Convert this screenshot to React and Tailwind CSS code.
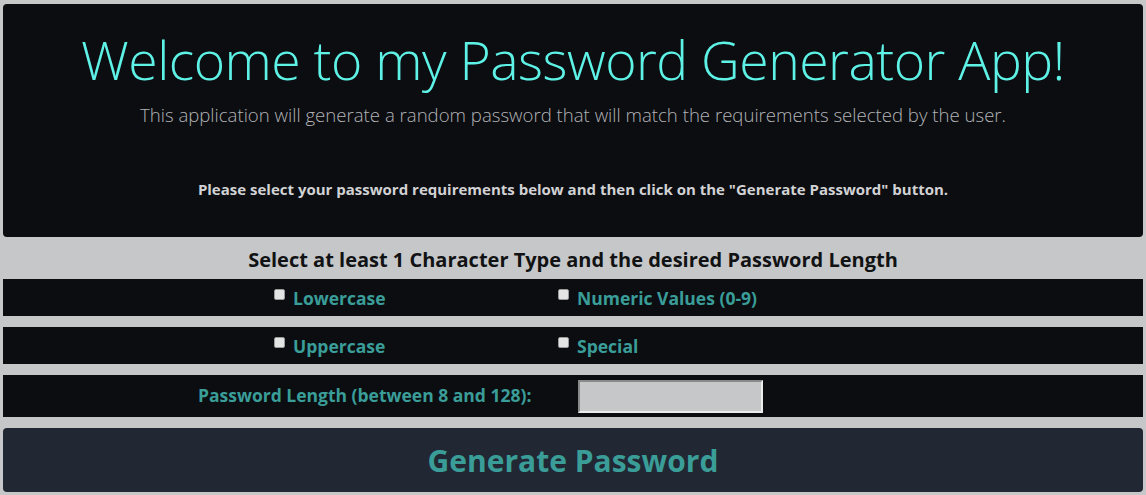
export default function App() {
  const sans = { fontFamily: '"Open Sans", "Noto Sans", sans-serif' };
  const Check = () => (
    <span className="inline-block w-[11px] h-[11px] rounded-[2px] bg-[#e4e4e4] border border-[#9a9a9a] mr-[8px] relative -top-[4px]" />
  );
  return (
    <div className="w-[1146px] h-[495px] bg-[#c6c7c9] px-[3px] pt-[4px] flex flex-col overflow-hidden" style={sans}>
      <div className="h-[233px] bg-[#0b0d11] rounded-[4px] flex flex-col items-center">
        <h1 className="mt-[24px] text-[53.5px] leading-[64px] font-light text-[#5ef2e6] tracking-[-0.5px]">
          Welcome to my Password Generator App!
        </h1>
        <p className="mt-[11px] text-[18.6px] leading-[24px] font-light text-[#b3b3b6]">
          This application will generate a random password that will match the requirements selected by the user.
        </p>
        <p className="mt-[52px] text-[15px] leading-[20px] font-bold text-[#d2d2d4]">
          Please select your password requirements below and then click on the "Generate Password" button.
        </p>
      </div>
      <div className="h-[42px] pt-[3px] flex items-center justify-center text-[20px] font-bold text-[#111213]">
        Select at least 1 Character Type and the desired Password Length
      </div>
      <div className="h-[37px] pt-[1px] bg-[#0b0d11] flex items-center pl-[271px] text-[17.5px] font-bold text-[#3a9d98]">
        <div className="w-[284px] flex items-center"><Check />Lowercase</div>
        <div className="flex items-center"><Check />Numeric Values (0-9)</div>
      </div>
      <div className="h-[11px]" />
      <div className="h-[37px] pt-[1px] bg-[#0b0d11] flex items-center pl-[271px] text-[17.5px] font-bold text-[#3a9d98]">
        <div className="w-[284px] flex items-center"><Check />Uppercase</div>
        <div className="flex items-center"><Check />Special</div>
      </div>
      <div className="h-[11px]" />
      <div className="h-[42px] bg-[#0b0d11] flex items-center pl-[195px] text-[17.5px] font-bold text-[#3a9d98]">
        <div className="w-[380px] -mt-[2px]">Password Length (between 8 and 128):</div>
        <div className="w-[185px] h-[33px] bg-[#c6c7c9] border-2 border-t-[#8a8a8a] border-l-[#8a8a8a] border-b-[#ececec] border-r-[#ececec]" />
      </div>
      <div className="h-[11px]" />
      <button className="h-[64px] bg-[#212733] rounded-[4px] flex items-center justify-center text-[30px] font-bold text-[#3a9d98]">
        Generate Password
      </button>
    </div>
  );
}
